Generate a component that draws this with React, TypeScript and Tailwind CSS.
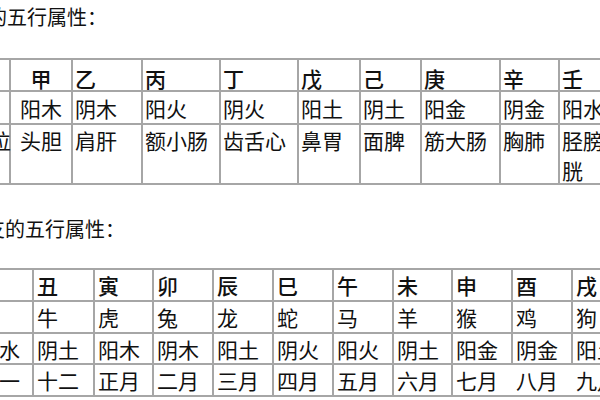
import React from "react";

type Col = { w: number; center?: boolean; pl?: number };

const t1Cols: Col[] = [
  { w: 42, pl: 0 },
  { w: 62, center: true },
  { w: 70 },
  { w: 78 },
  { w: 78 },
  { w: 62 },
  { w: 61 },
  { w: 79 },
  { w: 59 },
  { w: 62 },
];

const t1Rows: { h: number; head?: boolean; top?: boolean; cells: string[] }[] = [
  { h: 32, head: true, cells: ["", "甲", "乙", "丙", "丁", "戊", "己", "庚", "辛", "壬"] },
  { h: 33, cells: ["", "阳木", "阴木", "阳火", "阴火", "阳土", "阴土", "阳金", "阴金", "阳水"] },
  { h: 60, top: true, cells: ["部位", "头胆", "肩肝", "额小肠", "齿舌心", "鼻胃", "面脾", "筋大肠", "胸肺", "胫膀\n胱"] },
];

const t2Widths = [61, 61, 59, 60, 60, 60, 60, 59, 60, 60, 60];

const t2Rows: { h: number; head?: boolean; cells: string[] }[] = [
  { h: 32, head: true, cells: ["子", "丑", "寅", "卯", "辰", "巳", "午", "未", "申", "酉", "戌"] },
  { h: 32, cells: ["鼠", "牛", "虎", "兔", "龙", "蛇", "马", "羊", "猴", "鸡", "狗"] },
  { h: 31, cells: ["阳水", "阴土", "阳木", "阴木", "阳土", "阴火", "阳火", "阴土", "阳金", "阴金", "阳土"] },
  { h: 32, cells: ["十一", "十二", "正月", "二月", "三月", "四月", "五月", "六月", "七月", "八月", "九月"] },
];

function Table1() {
  return (
    <div className="ml-[-33px] mt-[24px] w-max border-t-2 border-l-2 border-[#a6a6a6] text-[21px]">
      {t1Rows.map((r, ri) => (
        <div key={ri} className="flex" style={{ height: r.h }}>
          {r.cells.map((c, ci) => {
            const col = t1Cols[ci];
            return (
              <div
                key={ci}
                className={
                  "shrink-0 border-r-2 border-b-2 border-[#a6a6a6] whitespace-pre leading-[30px] flex " +
                  (r.top ? "items-start " : r.head ? "items-center pt-[5px] " : "items-center ") +
                  (col.center ? "justify-center " : "justify-start ") +
                  (r.head ? "font-medium" : "")
                }
                style={{ width: col.w, paddingLeft: col.center ? 0 : col.pl ?? 2 }}
              >
                <span>{c}</span>
              </div>
            );
          })}
        </div>
      ))}
    </div>
  );
}

function Table2() {
  return (
    <div className="ml-[-29px] mt-[22px] w-max border-t-2 border-l-2 border-[#a6a6a6] text-[21px]">
      {t2Rows.map((r, ri) => (
        <div key={ri} className="flex" style={{ height: r.h }}>
          {r.cells.map((c, ci) => {
            const noBorder = ri === 3 && ci >= 8;
            return (
              <div
                key={ci}
                className={
                  "shrink-0 border-b-2 border-[#a6a6a6] flex items-center leading-[30px] whitespace-nowrap " +
                  (noBorder ? "" : "border-r-2 ") +
                  (r.head ? "font-medium" : "")
                }
                style={{ width: t2Widths[ci], paddingLeft: ci === 0 ? 5 : 3 }}
              >
                {c}
              </div>
            );
          })}
        </div>
      ))}
    </div>
  );
}

export default function App() {
  return (
    <div className="w-[600px] h-[400px] overflow-hidden bg-white text-[#111111] text-[20px] font-['Noto_Sans_CJK_SC','Noto_Sans',sans-serif]">
      <div className="ml-[-53px] h-[34px] leading-[34px] whitespace-nowrap">天干的五行属性：</div>
      <Table1 />
      <div className="ml-[-35px] mt-[27px] h-[34px] leading-[34px] whitespace-nowrap">地支的五行属性：</div>
      <Table2 />
    </div>
  );
}
